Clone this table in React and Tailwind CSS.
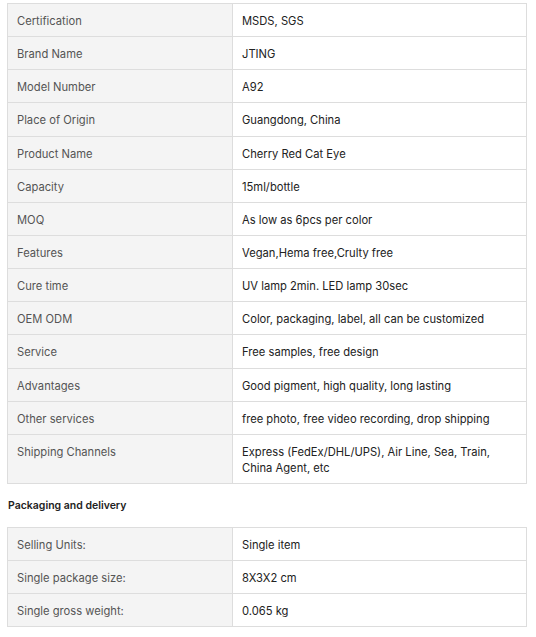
const specs = [
  ['Certification', 'MSDS, SGS'],
  ['Brand Name', 'JTING'],
  ['Model Number', 'A92'],
  ['Place of Origin', 'Guangdong, China'],
  ['Product Name', 'Cherry Red Cat Eye'],
  ['Capacity', '15ml/bottle'],
  ['MOQ', 'As low as 6pcs per color'],
  ['Features', 'Vegan,Hema free,Crulty free'],
  ['Cure time', 'UV lamp 2min. LED lamp 30sec'],
  ['OEM ODM', 'Color, packaging, label, all can be customized'],
  ['Service', 'Free samples, free design'],
  ['Advantages', 'Good pigment, high quality, long lasting'],
  ['Other services', 'free photo, free video recording, drop shipping'],
  ['Shipping Channels', 'Express (FedEx/DHL/UPS), Air Line, Sea, Train, China Agent, etc'],
];

const packaging = [
  ['Selling Units:', 'Single item'],
  ['Single package size:', '8X3X2 cm'],
  ['Single gross weight:', '0.065 kg'],
];

function SpecTable({ rows }) {
  return (
    <table className="w-[520px] border-collapse text-[11.2px] leading-4">
      <tbody>
        {rows.map(([label, value]) => (
          <tr key={label}>
            <td className="w-[225px] border border-[#dddddd] bg-[#f4f4f4] px-[9px] pt-[9px] pb-[7.15px] align-top text-[#555555]">{label}</td>
            <td className="border border-[#dddddd] bg-white pl-[9px] pr-[12px] pt-[9px] pb-[7.15px] align-top text-[#222222]">{value}</td>
          </tr>
        ))}
      </tbody>
    </table>
  );
}

export default function App() {
  return (
    <div className="min-h-screen bg-white px-[7px] pt-[3px]" style={{ fontFamily: 'Inter, sans-serif' }}>
      <SpecTable rows={specs} />
      <h3 className="mt-[15px] mb-[14px] pl-px text-[10.5px] font-semibold leading-[14px] text-[#222222]">Packaging and delivery</h3>
      <SpecTable rows={packaging} />
    </div>
  );
}
